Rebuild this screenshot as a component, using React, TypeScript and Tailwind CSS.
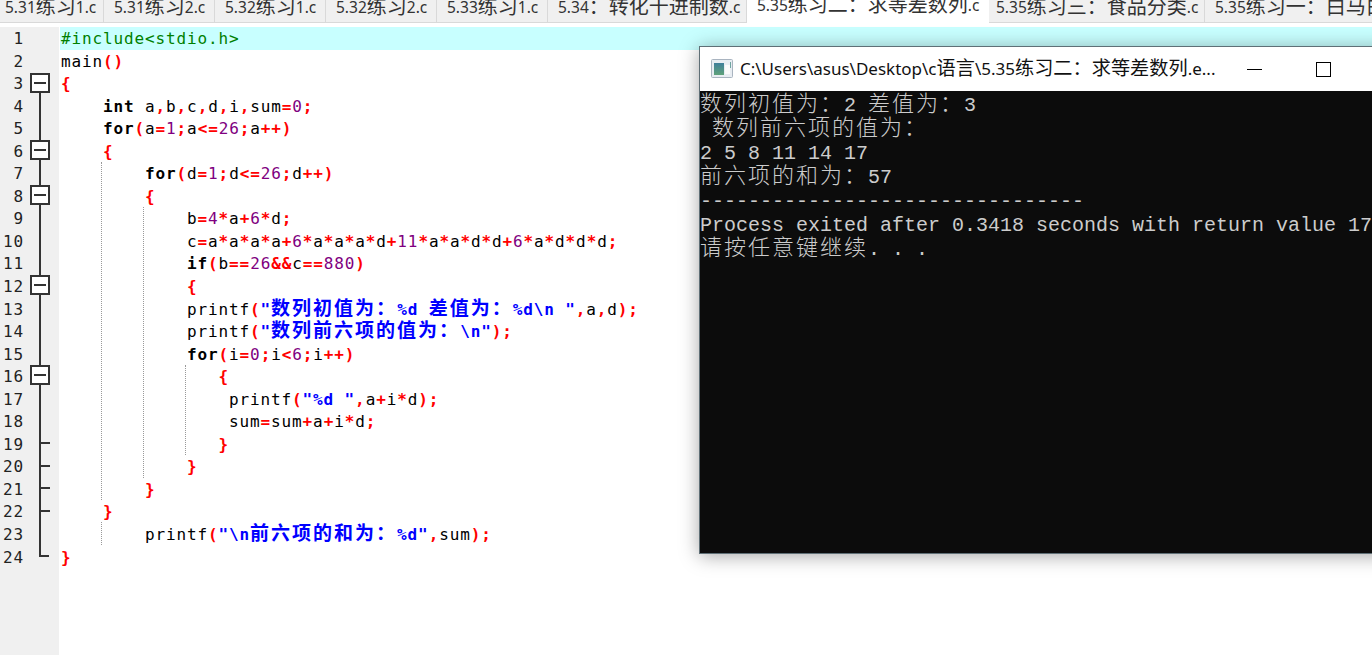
import React from "react";

const uiFont = { fontFamily: '"Noto Sans","Noto Sans CJK SC",sans-serif' };
const codeFont = { fontFamily: '"DejaVu Sans Mono","Noto Sans CJK SC",monospace' };

const tabs = [
  { t: "5.31练习1.c", w: "w-[104px]", p: "pl-[5px]" },
  { t: "5.31练习2.c", w: "w-[111px]", p: "pl-[10px]" },
  { t: "5.32练习1.c", w: "w-[111px]", p: "pl-[10px]" },
  { t: "5.32练习2.c", w: "w-[111px]", p: "pl-[10px]" },
  { t: "5.33练习1.c", w: "w-[111px]", p: "pl-[10px]" },
  { t: "5.34：转化十进制数.c", w: "w-[199px]", p: "pl-[10px]" },
  { t: "5.35练习二：求等差数列.c", w: "w-[242px]", p: "pl-[10px]", active: true },
  { t: "5.35练习三：食品分类.c", w: "w-[216px]", p: "pl-[7px]" },
  { t: "5.35练习一：白马白", w: "w-[180px]", p: "pl-[10px]" },
];

const lines = [
  "#include<stdio.h>",
  "main()",
  "{",
  "    int a,b,c,d,i,sum=0;",
  "    for(a=1;a<=26;a++)",
  "    {",
  "        for(d=1;d<=26;d++)",
  "        {",
  "            b=4*a+6*d;",
  "            c=a*a*a*a+6*a*a*a*d+11*a*a*d*d+6*a*d*d*d;",
  "            if(b==26&&c==880)",
  "            {",
  '            printf("数列初值为：%d 差值为：%d\\n ",a,d);',
  '            printf("数列前六项的值为：\\n");',
  "            for(i=0;i<6;i++)",
  "               {",
  '                printf("%d ",a+i*d);',
  "                sum=sum+a+i*d;",
  "               }",
  "            }",
  "        }",
  "    }",
  '        printf("\\n前六项的和为：%d",sum);',
  "}",
];

const cjk = /[\u4e00-\u9fff\uff1a]/;
const cjkSplit = /[\u4e00-\u9fff\uff1a]+|[^\u4e00-\u9fff\uff1a]+/g;

function Mixed({ text, cls }: { text: string; cls: string }) {
  const runs = text.match(cjkSplit) || [];
  return (
    <>
      {runs.map((r, i) =>
        cjk.test(r) ? (
          <span key={i} className={cls}>{r}</span>
        ) : (
          <span key={i}>{r}</span>
        ),
      )}
    </>
  );
}

function Code({ text }: { text: string }) {
  if (text.startsWith("#")) return <span className="text-[#008000]">{text}</span>;
  const parts = text.match(/"[^"]*"|[A-Za-z_]+|\d+|\s+|./g) || [];
  return (
    <>
      {parts.map((p, i) => {
        if (p.startsWith('"')) {
          return (
            <span key={i} className="font-bold text-[#0000ff]">
              <Mixed text={p} cls="text-[19px] leading-none tracking-[2px]" />
            </span>
          );
        }
        if (/^(int|for|if)$/.test(p)) return <span key={i} className="font-bold text-black">{p}</span>;
        if (/^[A-Za-z_]+$/.test(p)) return <span key={i} className="text-black">{p}</span>;
        if (/^\d+$/.test(p)) return <span key={i} className="text-[#800080]">{p}</span>;
        if (/^\s+$/.test(p)) return <span key={i}>{p}</span>;
        return <span key={i} className="font-bold text-[#ff0000]">{p}</span>;
      })}
    </>
  );
}

function Con({ text }: { text: string }) {
  return (
    <div className="h-6 whitespace-pre leading-6">
      <Mixed text={text} cls="text-[22px] font-light leading-[0] tracking-[2px]" />
    </div>
  );
}

function FoldGutter() {
  const boxes = [74, 141, 186, 276, 366];
  const ticks = [443, 466, 488, 511];
  return (
    <svg className="absolute left-0 top-0" width="59" height="655" fill="none" stroke="#333" strokeWidth="2">
      <path d="M40 93V556H49" />
      {ticks.map((y) => (
        <path key={y} d={`M40 ${y}H50`} />
      ))}
      {boxes.map((y) => (
        <g key={y}>
          <rect x="31" y={y} width="18" height="18" fill="#fff" />
          <path d={`M34 ${y + 9}H46`} />
        </g>
      ))}
    </svg>
  );
}

function Guide({ x, from, to }: { x: number; from: number; to: number }) {
  return (
    <div
      className="absolute w-px border-l border-dotted border-[#999]"
      style={{ left: x, top: from, height: to - from }}
    />
  );
}

export default function App() {
  return (
    <div className="relative flex h-[655px] w-[1372px] flex-col overflow-hidden bg-white">
      <div className="flex h-[23px] shrink-0 items-start overflow-hidden whitespace-nowrap text-[15.5px] leading-[14px] text-[#333]" style={uiFont}>
        {tabs.map((tab) =>
          tab.active ? (
            <div key={tab.t} className={`${tab.w} ${tab.p} -mt-[2px] h-[25px] shrink-0 bg-white`}>
              <Mixed text={tab.t} cls="align-[-1px] text-[20px] leading-[0]" />
            </div>
          ) : (
            <div key={tab.t} className={`${tab.w} ${tab.p} h-[23px] shrink-0 overflow-hidden border-r border-b border-[#d9d9d9] bg-[#f0f0f0]`}>
              <Mixed text={tab.t} cls="align-[-1px] text-[20px] leading-[0]" />
            </div>
          ),
        )}
      </div>
      <div className="h-1 shrink-0" />
      <div className="relative flex flex-1">
        <div className="w-[59px] shrink-0 bg-[#f0f0f0]">
          {lines.map((_, i) => (
            <div key={i} className="h-[22.55px] w-[24px] pt-px text-right text-[16px] leading-[22.55px] tracking-[0.87px] text-[#222]" style={codeFont}>
              {i + 1}
            </div>
          ))}
        </div>
        <div className="flex-1 pl-[2px] text-[16px] leading-[22.55px] tracking-[0.87px]" style={codeFont}>
          {lines.map((l, i) => (
            <div key={i} className={`-ml-[1px] h-[22.55px] whitespace-pre pl-[1px] pt-px ${i === 0 ? "bg-[#c8ffff]" : ""}`}>
              <Code text={l} />
            </div>
          ))}
        </div>
      </div>
      <FoldGutter />
      <Guide x={101} from={162} to={500} />
      <Guide x={101} from={522} to={545} />
      <Guide x={143} from={207} to={478} />
      <Guide x={185} from={365} to={455} />

      <div className="absolute left-[699px] top-[46px] h-[508px] w-[700px] border border-[#5f6f76] bg-white shadow-[0_2px_18px_rgba(0,0,0,0.35)]">
        <div className="flex h-[44px] items-center whitespace-nowrap pl-[11px] text-[17px] text-[#111]" style={uiFont}>
          <svg width="22" height="20" viewBox="0 0 22 20" className="mr-[7px] shrink-0">
            <rect x="0.5" y="0.5" width="21" height="18" rx="1" fill="#e8edf2" stroke="#a9b4c0" />
            <defs>
              <linearGradient id="g" x1="0" y1="0" x2="0" y2="1">
                <stop offset="0" stopColor="#3f7f9a" />
                <stop offset="1" stopColor="#5fa27a" />
              </linearGradient>
            </defs>
            <rect x="3" y="4" width="10" height="12" fill="url(#g)" />
            <rect x="14" y="6" width="5" height="9" fill="#fafafa" />
            <rect x="19" y="3" width="1" height="6" fill="#6fa5a0" />
          </svg>
          <span className="w-[490px] shrink-0 overflow-hidden">
            <Mixed text="C:\Users\asus\Desktop\c语言\5.35练习二：求等差数列.e..." cls="text-[19.2px] leading-[0]" />
          </span>
          <div className="ml-[17px] h-px w-[15px] shrink-0 bg-black" />
          <div className="ml-[54px] h-[15px] w-[15px] shrink-0 border border-black" />
        </div>
        <div className="h-[462px] bg-[#0c0c0c] pt-[3px] text-[20px] text-[#cccccc]" style={{ fontFamily: '"Liberation Mono","Noto Sans CJK SC",monospace' }}>
          <Con text="数列初值为：2 差值为：3" />
          <Con text=" 数列前六项的值为：" />
          <Con text="2 5 8 11 14 17" />
          <Con text="前六项的和为：57" />
          <Con text="--------------------------------" />
          <Con text="Process exited after 0.3418 seconds with return value 17" />
          <Con text="请按任意键继续. . ." />
        </div>
      </div>
    </div>
  );
}
